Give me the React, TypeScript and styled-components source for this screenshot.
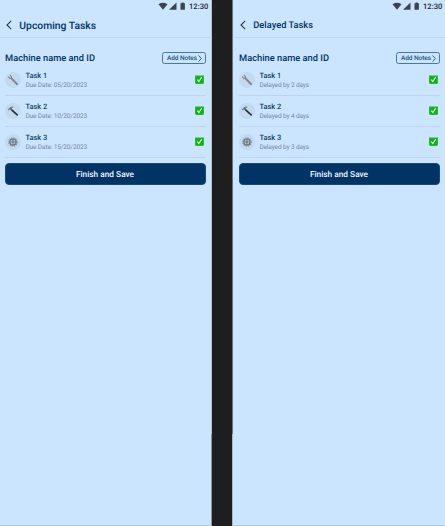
import React from 'react';
import styled, { createGlobalStyle } from 'styled-components';

const GlobalStyle = createGlobalStyle`
  * { box-sizing: border-box; }
  body {
    margin: 0;
    background: #1e1e1e;
    font-family: Roboto, sans-serif;
    overflow: hidden;
    text-rendering: geometricPrecision;
  }
`;

const Board = styled.div`
  display: flex;
  justify-content: space-between;
  width: 445px;
  height: 526px;
  background: #1e1e1e;
`;

const Screen = styled.section<{ $side: 'left' | 'right' }>`
  width: ${p => (p.$side === 'left' ? 212 : 213)}px;
  height: 526px;
  padding-left: ${p => (p.$side === 'right' ? 2 : 0)}px;
  border-bottom: 1px solid #b4cadf;
  background:
    linear-gradient(
      ${p => (p.$side === 'left' ? '#abc3dc 434px, #8796a5 434px' : '#657381 434px, #a3b8cc 434px')}
    ) ${p => (p.$side === 'left' ? 'right' : 'left')} top / 1px 100% no-repeat,
    #cce5ff;
`;

const StatusBar = styled.div`
  display: flex;
  align-items: center;
  height: 12px;
  padding-left: 158px;
  color: #20252a;
  font-size: 7.6px;
  font-weight: 500;
  line-height: 12px;
  svg { display: block; flex: none; }
`;

const Clock = styled.span`
  width: 20px;
  height: 12px;
  margin-left: 2px;
  padding-top: 1px;
  line-height: 11px;
  white-space: nowrap;
`;

const Header = styled.header`
  display: flex;
  align-items: center;
  height: 26px;
  padding-left: 6px;
  border-bottom: 1px solid #bfd7f0;
`;

const Title = styled.h1<{ $size: number }>`
  margin: 0 0 0 7.3px;
  padding-top: 2px;
  color: #003366;
  font-size: ${p => p.$size}px;
  font-weight: 500;
  line-height: 14px;
  white-space: nowrap;
`;

const Content = styled.main`
  width: 201px;
  margin-left: 5px;
  padding-top: 14px;
`;

const MachineRow = styled.div`
  display: flex;
  align-items: center;
  justify-content: space-between;
  height: 12px;
`;

const MachineName = styled.h2`
  margin: 0;
  padding-top: 1px;
  color: #003366;
  font-size: 9.3px;
  font-weight: 500;
  line-height: 12px;
  white-space: nowrap;
`;

const NotesButton = styled.button`
  display: flex;
  align-items: center;
  justify-content: space-between;
  width: 44px;
  height: 12px;
  padding: 0 3px 0 4px;
  border: 1px solid #4678a8;
  border-radius: 2.5px;
  background: transparent;
  color: #22517f;
  font: 500 6.5px/10px Roboto, sans-serif;
  letter-spacing: -0.07px;
  text-rendering: inherit;
  white-space: nowrap;
`;

const TaskList = styled.ul`
  margin: 1px 0 0;
  padding: 0;
  list-style: none;
`;

const TaskRow = styled.li`
  display: flex;
  align-items: center;
  height: 31px;
  padding-right: 2px;
  border-bottom: 1px solid #bdd6ee;
  > svg { flex: none; margin-top: -1px; }
`;

const ToolBadge = styled.div`
  display: flex;
  align-items: center;
  justify-content: center;
  width: 16px;
  height: 16px;
  margin-top: -1px;
  border-radius: 50%;
  background: #c1d9f1;
`;

const TaskText = styled.div`
  flex: 1;
  padding-left: 4.4px;
  white-space: nowrap;
`;

const TaskName = styled.div`
  color: #103f6f;
  font-size: 7.4px;
  font-weight: 500;
  line-height: 9px;
`;

const TaskNote = styled.div`
  color: #74889d;
  font-size: 6.5px;
  letter-spacing: -0.12px;
  line-height: 10px;
`;

const SaveButton = styled.button`
  display: block;
  width: 201px;
  height: 22px;
  margin-top: 5.4px;
  padding: 1px 1px 0 0;
  border: 1px solid #174a7b;
  border-radius: 4px;
  background: #003366;
  color: #f3f8fd;
  font: 500 8.3px/20px Roboto, sans-serif;
  text-rendering: inherit;
`;

const StatusIcons = () => (
  <svg width="29" height="12" viewBox="0 0 29 12" fill="#3b444e">
    <path d="M.5 4.2Q5 1.5 9.5 4.2L5 9.8Z" />
    <path d="M18.5 2.5V9.8H11Z" />
    <path d="M22.5 3.3h1.2v-.8h2v.8h1.2v6.5h-4.4Z" />
  </svg>
);

const BackIcon = () => (
  <svg width="6" height="10" viewBox="0 0 6 10" fill="none" stroke="#27384a" strokeWidth="1.1">
    <path d="M5.2.8 1 5l4.2 4.2" />
  </svg>
);

const NextIcon = () => (
  <svg width="4" height="7" viewBox="0 0 4 7" fill="none" stroke="#22517f" strokeWidth=".9">
    <path d="m.6.5 2.8 3L.6 6.5" />
  </svg>
);

const CheckIcon = () => (
  <svg width="9" height="9" viewBox="0 0 9 9">
    <rect width="9" height="9" rx="1.4" fill="#2bb53a" />
    <path d="M.8.5h7.4" stroke="#70d58a" strokeWidth="1" />
    <rect x="1" y="1.2" width="7" height="6.8" rx=".5" fill="#05b80b" />
    <path d="m2.4 4.6 1.5 2L6.6 2.2" fill="none" stroke="#fff" strokeWidth="1.1" />
  </svg>
);

type Tool = 'wrench' | 'hammer' | 'gear';

const ToolIcon = ({ tool }: { tool: Tool }) => (
  <svg width="12" height="12" viewBox="0 0 12 12" fill="none">
    {tool === 'wrench' && (
      <>
        <path d="m4.2 4.2 5.8 5.9" stroke="#77757b" strokeWidth="1.8" strokeLinecap="round" />
        <path d="M1.2 2.6 2.6 4.2 4.5 4.1 4.4 2.4 3 1.1" stroke="#85878e" strokeWidth="1.1" />
        <path d="m4.5 4.2 4.8 4.9" stroke="#aaa3a5" strokeWidth=".5" />
      </>
    )}
    {tool === 'hammer' && (
      <>
        <path d="m4.6 4.8 5.6 5" stroke="#272c31" strokeWidth="1.6" strokeLinecap="round" />
        <path d="M1.2 4.9 3.6 2.8Q4.8 1.9 6.2 2.3" stroke="#767e86" strokeWidth="1.3" />
        <path d="m3.3 3.3 1.6 1.7" stroke="#535a62" strokeWidth="1.6" />
      </>
    )}
    {tool === 'gear' && (
      <>
        <circle cx="6" cy="6" r="4.3" stroke="#858e98" strokeWidth="1.1" strokeDasharray="1.15 1.1" />
        <circle cx="6" cy="6" r="3.1" stroke="#737981" strokeWidth="1.5" />
        <circle cx="6" cy="6" r="1.2" fill="#a1aab4" stroke="#575f69" strokeWidth=".8" />
      </>
    )}
  </svg>
);

interface PhoneProps {
  side: 'left' | 'right';
  title: string;
  titleSize: number;
  notes: string[];
}

const tools: Tool[] = ['wrench', 'hammer', 'gear'];

const Phone = ({ side, title, titleSize, notes }: PhoneProps) => (
  <Screen $side={side}>
    <StatusBar><StatusIcons /><Clock>12:30</Clock></StatusBar>
    <Header><BackIcon /><Title $size={titleSize}>{title}</Title></Header>
    <Content>
      <MachineRow>
        <MachineName>Machine name and ID</MachineName>
        <NotesButton>Add Notes<NextIcon /></NotesButton>
      </MachineRow>
      <TaskList>
        {notes.map((note, i) => (
          <TaskRow key={note}>
            <ToolBadge><ToolIcon tool={tools[i]} /></ToolBadge>
            <TaskText>
              <TaskName>Task {i + 1}</TaskName>
              <TaskNote>{note}</TaskNote>
            </TaskText>
            <CheckIcon />
          </TaskRow>
        ))}
      </TaskList>
      <SaveButton>Finish and Save</SaveButton>
    </Content>
  </Screen>
);

export default function App() {
  return (
    <>
      <GlobalStyle />
      <Board>
        <Phone side="left" title="Upcoming Tasks" titleSize={10.35}
          notes={['Due Date: 05/20/2023', 'Due Date: 10/20/2023', 'Due Date: 15/20/2023']} />
        <Phone side="right" title="Delayed Tasks" titleSize={9.3}
          notes={['Delayed by 2 days', 'Delayed by 4 days', 'Delayed by 3 days']} />
      </Board>
    </>
  );
}
